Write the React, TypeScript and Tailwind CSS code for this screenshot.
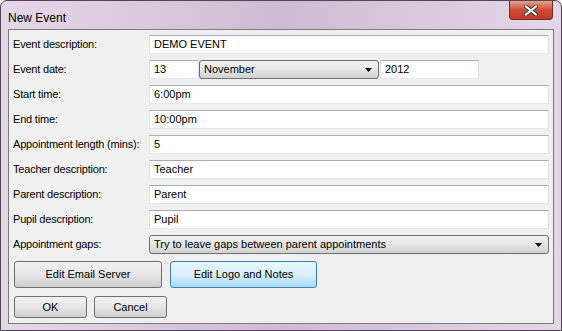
import React from 'react'

const font = { fontFamily: '"Liberation Sans", Arial, sans-serif' }

function TextBox({ value, className = '' }: { value: string; className?: string }) {
  return (
    <div
      className={`h-[19px] flex items-center bg-white border border-[#e2e3ea] border-t-[#abadb3] border-b-[#e3e9ef] pl-[4px] text-[11px] text-black ${className}`}
    >
      {value}
    </div>
  )
}

function Combo({ value, className = '' }: { value: string; className?: string }) {
  return (
    <div
      className={`h-[19px] flex items-center rounded-[3px] border border-[#707070] bg-gradient-to-b from-[#f2f2f2] via-[#e6e6e6] to-[#d1d1d1] pl-[4px] pr-[6px] text-[11px] text-black ${className}`}
    >
      <span className="flex-1">{value}</span>
      <svg width="7" height="4" viewBox="0 0 7 4">
        <path d="M0 0h7L3.5 4z" fill="#000" />
      </svg>
    </div>
  )
}

function Btn({ label, hot = false, className = '' }: { label: string; hot?: boolean; className?: string }) {
  return (
    <div
      className={`flex items-center justify-center rounded-[3px] border text-[11px] text-black ${
        hot
          ? 'border-[#3c7fb1] bg-gradient-to-b from-[#eaf6fd] via-[#d9f0fc] to-[#a7d9f5]'
          : 'border-[#707070] bg-gradient-to-b from-[#f2f2f2] via-[#e6e6e6] to-[#cfcfcf]'
      } ${className}`}
    >
      {label}
    </div>
  )
}

function Row({ label, children }: { label: string; children: React.ReactNode }) {
  return (
    <div className="flex items-center h-[19px]">
      <div className="w-[136px] shrink-0 text-[11px] tracking-[-0.2px] text-black">{label}</div>
      <div className="flex-1 flex">{children}</div>
    </div>
  )
}

export default function App() {
  return (
    <div
      style={font}
      className="w-[562px] h-[331px] flex flex-col rounded-t-[7px] border border-[#4f4652] bg-gradient-to-r from-[#e4d8e7] via-[#cfbbd4] to-[#e3d6e6]"
    >
      {/* title bar */}
      <div className="h-[28px] flex items-start shrink-0">
        <div className="pl-[7px] pt-[8px] text-[12px] text-black">New Event</div>
        <div className="ml-auto mr-[8px] w-[44px] h-[19px] flex items-center justify-center rounded-b-[4px] border border-t-0 border-[#7a2b22] bg-gradient-to-b from-[#e8a092] via-[#cc4a34] to-[#c0392b]">
          <svg width="14" height="11" viewBox="0 0 14 11">
            <path d="M2 1.5l10 8M12 1.5l-10 8" stroke="#3a3a3a" strokeWidth="4" strokeLinecap="square" />
            <path d="M2 1.5l10 8M12 1.5l-10 8" stroke="#fff" strokeWidth="2" strokeLinecap="square" />
          </svg>
        </div>
      </div>

      {/* client area */}
      <div className="flex-1 mx-[7px] mb-[6px] border border-[#7a7a7a] bg-[#f0f0f0] pt-[5px] pl-[4px] pr-[4px] flex flex-col">
        <div className="flex flex-col gap-[6px]">
          <Row label="Event description:">
            <TextBox value="DEMO EVENT" className="flex-1" />
          </Row>
          <Row label="Event date:">
            <TextBox value="13" className="w-[50px]" />
            <Combo value="November" className="w-[180px]" />
            <TextBox value="2012" className="w-[99px] ml-[1px]" />
          </Row>
          <Row label="Start time:">
            <TextBox value="6:00pm" className="flex-1" />
          </Row>
          <Row label="End time:">
            <TextBox value="10:00pm" className="flex-1" />
          </Row>
          <Row label="Appointment length (mins):">
            <TextBox value="5" className="flex-1" />
          </Row>
          <Row label="Teacher description:">
            <TextBox value="Teacher" className="flex-1" />
          </Row>
          <Row label="Parent description:">
            <TextBox value="Parent" className="flex-1" />
          </Row>
          <Row label="Pupil description:">
            <TextBox value="Pupil" className="flex-1" />
          </Row>
          <Row label="Appointment gaps:">
            <Combo value="Try to leave gaps between parent appointments" className="flex-1" />
          </Row>
        </div>

        <div className="flex gap-[8px] mt-[7px] pl-[1px]">
          <Btn label="Edit Email Server" className="w-[148px] h-[27px]" />
          <Btn label="Edit Logo and Notes" hot className="w-[147px] h-[27px]" />
        </div>
        <div className="flex gap-[7px] mt-[8px] pl-[1px]">
          <Btn label="OK" className="w-[73px] h-[22px]" />
          <Btn label="Cancel" className="w-[73px] h-[22px]" />
        </div>
      </div>
    </div>
  )
}
